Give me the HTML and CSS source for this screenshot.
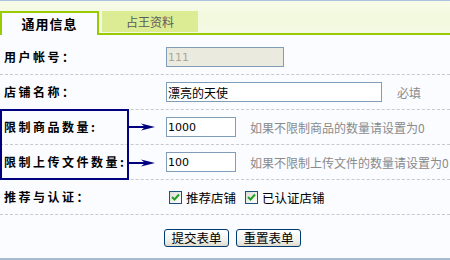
FILE: index.html
```html
<!DOCTYPE html>
<html>
  <head>
    <meta charset="UTF-8" />
    <link rel="stylesheet" href="styles.css">
  </head>
  <body>
    <div class="panel">
      <div class="tabs">
        <div class="tab current">通用信息</div>
        <div class="tabrest">
          <div class="tab">占王资料</div>
        </div>
      </div>

      <div class="form">
        <div class="row first">
          <div class="label">用户帐号：</div>
          <input class="txt small" type="text" value="111" disabled>
        </div>
        <div class="row">
          <div class="label">店铺名称：</div>
          <input class="txt wide" type="text" value="漂亮的天使">
          <span class="hint req">必填</span>
        </div>
        <div class="row">
          <div class="label">限制商品数量:</div>
          <input class="txt num" type="text" value="1000">
          <span class="hint">如果不限制商品的数量请设置为0</span>
        </div>
        <div class="row">
          <div class="label">限制上传文件数量:</div>
          <input class="txt num" type="text" value="100">
          <span class="hint">如果不限制上传文件的数量请设置为0</span>
        </div>
        <div class="row">
          <div class="label">推荐与认证：</div>
          <label class="check"><span class="box"><svg width="11" height="11" viewBox="0 0 11 11"><path d="M2 5 L4.5 7.5 L9 2.5" fill="none" stroke="#21a121" stroke-width="2"/></svg></span>推荐店铺</label>
          <label class="check"><span class="box"><svg width="11" height="11" viewBox="0 0 11 11"><path d="M2 5 L4.5 7.5 L9 2.5" fill="none" stroke="#21a121" stroke-width="2"/></svg></span>已认证店铺</label>
        </div>
        <div class="actions">
          <button type="button">提交表单</button>
          <button type="button">重置表单</button>
        </div>

        <!-- annotation over the two limit rows -->
        <div class="callout"></div>
        <svg class="arrow a1" width="28" height="10" viewBox="0 0 28 10"><path d="M0 5 H18" stroke="#000080" stroke-width="2"/><path d="M13 1.5 L27 5 L13 8.5 L17 5 Z" fill="#000080"/></svg>
        <svg class="arrow a2" width="28" height="10" viewBox="0 0 28 10"><path d="M0 5 H18" stroke="#000080" stroke-width="2"/><path d="M13 1.5 L27 5 L13 8.5 L17 5 Z" fill="#000080"/></svg>
      </div>
    </div>
  </body>
</html>
```

FILE: styles.css
```css
html,
body {
  margin: 0;
  background: #fbfcff;
}

body {
  font-family: "Liberation Sans", "Noto Sans CJK SC", sans-serif;
  font-size: 12px;
  color: #000;
}

.panel {
  border-top: 1px solid #a9c3df;
  border-bottom: 2px solid #a9bccf;
  height: 260px;
  box-sizing: border-box;
}

.tabs {
  display: flex;
  padding-top: 10px;
  background: linear-gradient(#f8fbea, #f1f8dc 50%, #f6fae6);
}

.tab {
  font-family: "Noto Sans CJK SC", sans-serif;
}

.tab.current {
  width: 99px;
  height: 24px;
  box-sizing: border-box;
  border: 2px solid #99cc00;
  border-bottom: none;
  background: #fbfcff;
  text-align: center;
  font-size: 13px;
  font-weight: bold;
  line-height: 22px;
  letter-spacing: 1px;
}

.tabrest {
  flex: 1;
  height: 24px;
  box-sizing: border-box;
  border-bottom: 2px solid #99cc00;
  padding-left: 3px;
}

.tabrest .tab {
  width: 96px;
  height: 21px;
  background: #dcec94;
  color: #5a5a5a;
  text-align: center;
  line-height: 22px;
}

.form {
  position: relative;
  padding-top: 5px;
}

.row {
  display: flex;
  align-items: center;
  height: 34px;
  border-bottom: 1px dashed #c9c9c9;
}

.label {
  width: 162px;
  padding-left: 4px;
  padding-bottom: 2px;
  font-family: "Noto Sans CJK SC", sans-serif;
  font-weight: bold;
  letter-spacing: 2.5px;
}

.txt {
  height: 20px;
  box-sizing: border-box;
  border: 1px solid #7f9db9;
  background: #fff;
  padding: 0 1px;
  font-family: "DejaVu Sans", "Noto Sans CJK SC", sans-serif;
  font-size: 11px;
  color: #000;
  margin: 0;
}

.txt.small {
  width: 118px;
  background: #ebeadf;
  color: #aca899;
}

.txt.wide {
  width: 216px;
  font-family: "Noto Sans CJK SC", sans-serif;
  font-size: 12px;
}

.txt.num {
  width: 70px;
}

.hint {
  color: #8a8a8a;
  font-family: "Noto Sans CJK SC", sans-serif;
  margin-left: 14px;
}

.hint.req {
  margin-left: 15px;
}

.check {
  display: flex;
  align-items: center;
  font-family: "Noto Sans CJK SC", sans-serif;
  font-size: 12.5px;
  margin-left: 3px;
  margin-right: 6px;
}

.check .box {
  width: 13px;
  height: 13px;
  box-sizing: border-box;
  border: 1px solid #1c5180;
  background: linear-gradient(135deg, #dcdcd7, #fff);
  margin-right: 4px;
  display: flex;
  align-items: center;
  justify-content: center;
}

.actions {
  display: flex;
  gap: 7px;
  padding: 14px 0 0 164px;
}

button {
  width: 65px;
  height: 18px;
  padding: 0;
  border: 1px solid #003c74;
  border-radius: 3px;
  background: linear-gradient(#ffffff, #f4f3ee 60%, #dedbcc);
  font-family: "Noto Sans CJK SC", sans-serif;
  font-size: 12.5px;
  line-height: 16px;
  color: #000;
}

.callout {
  position: absolute;
  left: 0;
  top: 74px;
  width: 129px;
  height: 71px;
  box-sizing: border-box;
  border: 2px solid #000080;
}

.arrow {
  position: absolute;
  left: 128px;
}

.arrow.a1 {
  top: 87px;
}

.arrow.a2 {
  top: 123px;
}
```
